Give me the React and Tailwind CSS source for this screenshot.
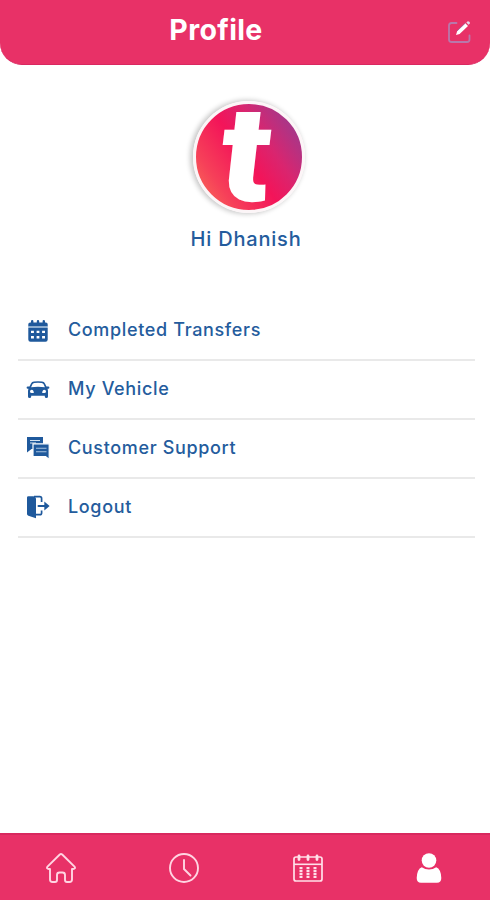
function EditIcon() {
  return (
    <svg width="24" height="24" viewBox="0 0 24 24" fill="none">
      <path
        d="M9.5 3H4.5Q2 3 2 5.500V19.500Q2 22 4.500 22H20Q22.500 22 22.500 19.500V15.500"
        stroke="#b878ab"
        strokeWidth="1.800"
        strokeLinecap="round"
      />
      <path d="M9 15L10.200 11L18.300 3.300L21 5.900L12.600 14Z" fill="#fff" />
      <path d="M19.300 2.400L20.800 1.200Q23.300 1.500 22.800 3.400L21.600 4.700Z" fill="#e5d6ea" />
      <path d="M10 11L18.200 3.200" stroke="#8b5b9b" strokeWidth="0.700" />
    </svg>
  );
}

function CalendarIcon() {
  return (
    <svg width="24" height="24" viewBox="0 -1 24 24" fill="#1f599c">
      <path d="M2.300 7.600V5.200Q2.300 3.400 4.200 3.400H5V2.200Q5 1 6.200 1T7.400 2.200V3.400H10.800V2.200Q10.800 1 12 1T13.200 2.200V3.400H16.600V2.200Q16.600 1 17.800 1T19 2.200V3.400H19.800Q21.700 3.400 21.700 5.200V7.600Z" />
      <path d="M2.300 7.500H21.700V9.100H2.300Z" fill="#8fb0d3" />
      <path
        fillRule="evenodd"
        d="M2.300 9H21.700V20.500Q21.700 22.700 19.500 22.700H4.500Q2.300 22.700 2.300 20.500ZM5 11.700V14.100H7.900V11.700ZM10.600 11.700V14.100H13.400V11.700ZM16.100 11.700V14.100H19V11.700ZM5 17V19.400H7.900V17ZM10.600 17V19.400H13.400V17ZM16.100 17V19.400H19V17Z"
      />
    </svg>
  );
}

function CarIcon() {
  return (
    <svg width="24" height="24" viewBox="0 -1 24 24" fill="#1f599c">
      <path
        fillRule="evenodd"
        d="M8 3.500Q12 2.800 16 3.500Q18.300 3.800 19 5.400L20.500 8.600H22.200Q23.400 8.600 23.400 9.700T22.200 10.800H21.500Q22 12 22 13V18.400Q22 20 20.400 20T18.800 18.400V17.700H5.200V18.400Q5.200 20 3.600 20T2 18.400V13Q2 12 2.500 10.800H1.800Q0.600 10.800 0.600 9.700T1.800 8.600H3.500L5 5.400Q5.700 3.800 8 3.500ZM8.300 5Q6.900 5.200 6.400 6.200L5.100 9.200Q12 8.400 18.900 9.200L17.600 6.200Q17.100 5.200 15.700 5Q12 4.500 8.300 5ZM5.700 11.800Q4 11.800 4 13.400T5.700 15H7.800Q7.800 12 5.700 11.800ZM18.300 11.800Q16.200 12 16.200 15H18.300Q20 15 20 13.400T18.300 11.800Z"
      />
    </svg>
  );
}

function ChatIcon() {
  return (
    <svg width="24" height="24" viewBox="0 0 24 24">
      <path d="M1 1H17V13H5.500L1 16.500Z" fill="#1f599c" />
      <path d="M4 4.500H14M4 7H10" stroke="#d5e3f0" strokeWidth="1.200" />
      <path d="M7 7.800H23.200V23.500L19.600 20.600H7Z" fill="#1f599c" stroke="#fff" strokeWidth="1.200" />
      <path d="M10 12.200H20.500M10 15.800H20.500" stroke="#a9c3df" strokeWidth="1.100" />
    </svg>
  );
}

function LogoutIcon() {
  return (
    <svg width="24" height="24" viewBox="0 0 24 24" fill="none">
      <path d="M1 2.500Q1 1.200 2.400 1.200H7.200Q10 1.600 10 4.200V23.200L2.400 20.700Q1 20.300 1 19Z" fill="#1f599c" />
      <path d="M8 1.700H13.800Q15.600 1.700 15.600 3.500V7M15.600 15.500V18Q15.600 19.700 13.800 19.700H10" stroke="#1f599c" strokeWidth="1.700" />
      <path d="M12.500 11H20" stroke="#1f599c" strokeWidth="2" strokeLinecap="round" />
      <path d="M18.300 6.400L23.600 11L18.300 15.600Z" fill="#1f599c" />
    </svg>
  );
}

function HomeNavIcon() {
  return (
    <svg width="30" height="30" viewBox="0 0 30 30" fill="none" stroke="#ffd5e2" strokeWidth="1.900" strokeLinejoin="round">
      <path d="M13.800 1.500Q15 0.500 16.200 1.500L28.500 13.600Q30 15.600 27 16H26V26.500Q26 29 23.500 29H21Q19 29 19 27V22Q19 19.500 16.500 19.500H13.500Q11 19.500 11 22V27Q11 29 9 29H6.500Q4 29 4 26.500V16H3Q0 15.600 1.500 13.600Z" />
    </svg>
  );
}

function ClockNavIcon() {
  return (
    <svg width="30" height="30" viewBox="0 0 30 30" fill="none" stroke="#ffd5e2" strokeWidth="1.900">
      <circle cx="15" cy="15" r="14" />
      <path d="M15 7V16L21.500 22.500" strokeLinecap="round" />
    </svg>
  );
}

function CalendarNavIcon() {
  return (
    <svg width="30" height="30" viewBox="0 0 30 30" fill="none" stroke="#ffe0e9">
      <rect x="1" y="4" width="28" height="24" rx="2" strokeWidth="1.700" />
      <path d="M1 11.300H29" strokeWidth="1.600" />
      <path d="M6 3V6.500M15 3V6.500M24 3V6.500" strokeWidth="2.800" strokeLinecap="round" />
      <path d="M8 14V25M15 14V25M22 14V25" strokeWidth="3" strokeDasharray="2.200 0.800" />
    </svg>
  );
}

function UserNavIcon() {
  return (
    <svg width="30" height="30" viewBox="0 0 30 30" fill="#fff">
      <circle cx="15" cy="7.500" r="7.300" />
      <path d="M7.800 14.200Q11 16.500 15 16.500T22.200 14.200Q27 16 27.300 25Q27.300 29.800 23 29.800H7Q2.700 29.800 2.700 25Q3 16 7.800 14.200Z" />
    </svg>
  );
}

const menuItems = [
  { label: "Completed Transfers", icon: CalendarIcon },
  { label: "My Vehicle", icon: CarIcon },
  { label: "Customer Support", icon: ChatIcon },
  { label: "Logout", icon: LogoutIcon },
];

const navItems = [
  { label: "Home", icon: HomeNavIcon },
  { label: "History", icon: ClockNavIcon },
  { label: "Calendar", icon: CalendarNavIcon, className: "pl-[3px]" },
  { label: "Profile", icon: UserNavIcon },
];

export default function App() {
  return (
    <div className="flex h-[900px] w-[490px] flex-col overflow-hidden bg-white font-['Inter',sans-serif] text-[#245c9d]">
      <header className="grid h-[65px] shrink-0 grid-cols-[60px_1fr_60px] rounded-b-[22px] border-b border-[#d92860] bg-[#e83167]">
        <h1 className="col-start-2 mt-3 pr-[58px] text-center text-[28.5px] leading-9 font-bold tracking-[0.35px] text-white">
          Profile
        </h1>
        <button type="button" aria-label="Edit profile" className="mt-5 ml-[17px] h-6 w-6">
          <EditIcon />
        </button>
      </header>

      <main className="flex flex-1 flex-col">
        <section className="flex flex-col items-center">
          <div className="mt-9 ml-[7px] flex h-[112px] w-[112px] items-center justify-center rounded-full border-[3px] border-[#fcf5f7] bg-[linear-gradient(55deg,#fa7156_5%,#f64059_24%,#f31459_48%,#d9256f_65%,#8c4096_95%)] bg-origin-border shadow-[-2px_0_5px_1px_rgba(0,0,0,0.22)]">
            <span className="-mt-[4px] mr-[7px] block scale-x-[1.12] skew-x-[4deg] font-['Roboto',sans-serif] text-[135px] leading-[90px] font-black text-white italic">
              t
            </span>
          </div>
          <p className="mt-[11px] ml-[2px] text-[20px] leading-[30px] font-medium tracking-[0.8px]">Hi Dhanish</p>
        </section>

        <ul className="mt-12 mr-[15px] ml-[18px]">
          {menuItems.map(({ label, icon: Icon }) => (
            <li key={label} className="flex h-[59px] items-center border-b-2 border-[#e9e9e9] pb-px pl-2">
              <Icon />
              <span className="ml-[18px] text-[18px] leading-6 font-medium tracking-[0.65px]">{label}</span>
            </li>
          ))}
        </ul>
      </main>

      <nav className="grid h-[67px] shrink-0 grid-cols-4 border-t-2 border-[#d8285e] bg-[#e83167]">
        {navItems.map(({ label, icon: Icon, className }) => (
          <button
            key={label}
            type="button"
            aria-label={label}
            className={`flex items-center justify-center pt-px ${className || ""}`}
          >
            <Icon />
          </button>
        ))}
      </nav>
    </div>
  );
}
